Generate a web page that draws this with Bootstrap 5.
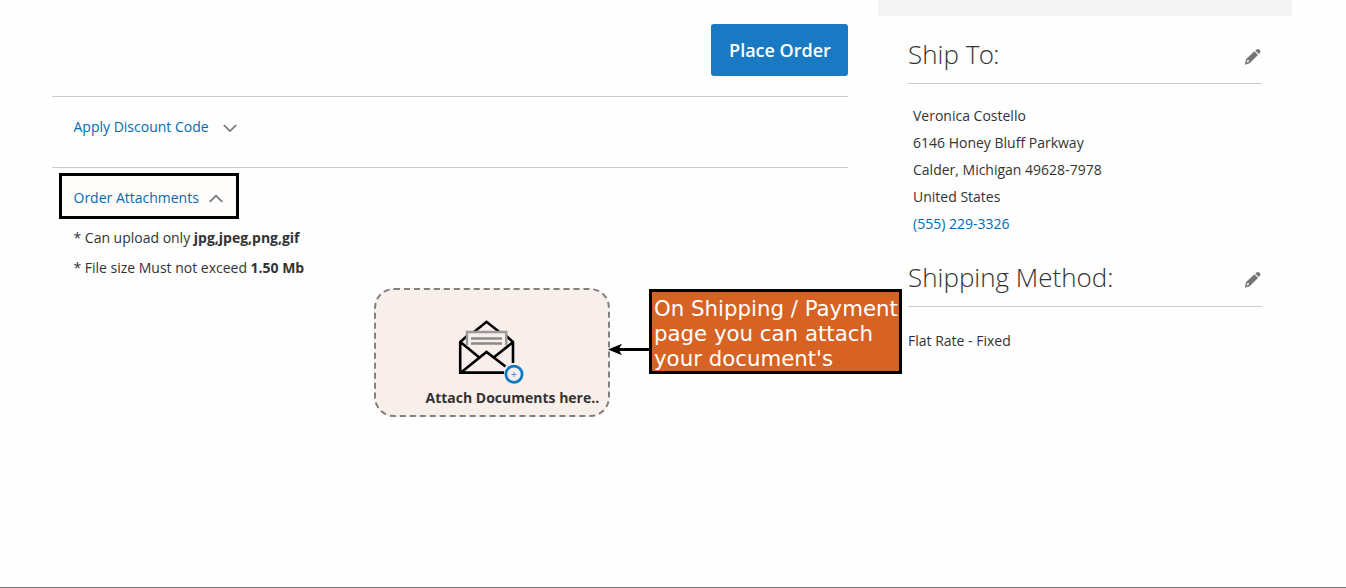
<!DOCTYPE html>
<html lang="en">
<head>
<meta charset="utf-8">
<meta name="viewport" content="width=device-width, initial-scale=1">
<title>Checkout</title>
<link rel="stylesheet" href="https://cdn.jsdelivr.net/npm/bootstrap@5.3.0/dist/css/bootstrap.min.css">
<style>
  body { font: 14px/27px "Open Sans", sans-serif; color: #333; background: #fefefe; }
  a { color: #006bb4; text-decoration: none; }
  .checkout { height: 588px; padding-left: 52px; gap: 30px; border-bottom: 1px solid #777; }
  .payment { width: 796px; padding-top: 24px; }
  .summary { width: 414px; }
  .btn-order { --bs-btn-color: #fff; --bs-btn-bg: #1979c3; --bs-btn-hover-bg: #006bb4; --bs-btn-hover-color: #fff;
    width: 137px; height: 52px; padding: 0 0 0 1px; border: 0; border-radius: 3px; font-size: 18px; font-weight: 600; margin-bottom: 20px; }
  .option { border-top: 1px solid #ccc; }
  .discount { height: 71px; padding: 16px 0 0 21.5px; }
  .discount svg { margin-left: 10.5px; }
  .attach-toggle { width: 180px; height: 46px; margin: 5px 0 0 7px; padding: 2px 0 0 11.5px; border: 3px solid #000; background: #fefdfc; }
  .attach-toggle svg { margin: 2px 0 0 10px; }
  .rules { padding: 4px 0 0 21.5px; margin: 0 0 5px; line-height: 30px; letter-spacing: -.01px; }
  .dropzone { width: 236px; height: 129px; margin-left: 322px; padding-top: 28px; background: #f9efea; border-radius: 20px; border: 2px dashed #808080; }
  .dropzone .envelope { margin-left: 81px; }
  .dropzone strong { display: block; margin-left: 49.5px; line-height: 20px; margin-top: 3px; white-space: nowrap; }
  .totals-end { height: 16px; background: #f4f4f4; }
  .info { padding: 0 30px; }
  .info-title { height: 68px; padding-top: 10px; border-bottom: 1px solid #ccc; }
  .info-title h2 { font-size: 26px; font-weight: 300; line-height: 56px; margin: 0; }
  .info-title svg { margin-top: 22px; }
  address { margin: 18px 0 0 5px; line-height: 27px; }
  .method .info-title { margin-top: 2px; }
  .callout { left: 649px; top: 289px; width: 253px; height: 85px; border: 3px solid #000; background: #d66323; color: #fff;
    font: 21.3px/25px "DejaVu Sans", sans-serif; padding: 4px 0 0 2px; white-space: nowrap; }
  .pointer { left: 608px; top: 342px; }
</style>
</head>
<body>
<div class="checkout d-flex position-relative overflow-hidden">
  <main class="payment flex-shrink-0">
    <div class="d-flex justify-content-end"><button class="btn btn-order">Place Order</button></div>
    <section class="option discount">
      <a href="#">Apply Discount Code</a>
      <svg width="14" height="9" viewBox="0 0 14 9" fill="none" stroke="#757575" stroke-width="1.7"><path d="M.8 1 7 7.100l6.200-6.100"/></svg>
    </section>
    <section class="option">
      <div class="attach-toggle d-flex align-items-center">
        <a href="#">Order Attachments</a>
        <svg width="14" height="9" viewBox="0 0 14 9" fill="none" stroke="#757575" stroke-width="1.7"><path d="M.8 7.8 7 1.7l6.200 6.100"/></svg>
      </div>
      <ul class="rules list-unstyled">
        <li>* Can upload only <b>jpg,jpeg,png,gif</b></li>
        <li>* File size Must not exceed <b>1.50 Mb</b></li>
      </ul>
      <div class="dropzone">
        <svg class="envelope d-block" width="70" height="67" viewBox="17 13 70 67" fill="none">
          <path d="M34 27 46.500 16.800 59.400 27M27 31l-6.800 6v30.600H64M66.300 31l6.700 6V58M21 37.500l18 14.700M72.500 37.500 54 52.200M21 67.500 46.500 47 65.500 61.500" stroke="#000" stroke-width="2.6"/>
          <path d="M27 40V27h39.300v13" stroke="#999" stroke-width="2.400"/>
          <path d="M31 33.500h31M31 38.500h31" stroke="#8b8b8b" stroke-width="2.500"/>
          <circle cx="74" cy="69.200" r="10" fill="#f9efea"/>
          <circle cx="74" cy="69.200" r="8.100" stroke="#087ac6" stroke-width="2.800"/>
          <path d="M71.500 69.500h5M74 67v5" stroke="#4c9bd0" stroke-width="1"/>
        </svg>
        <strong>Attach Documents here..</strong>
      </div>
    </section>
  </main>
  <aside class="summary flex-shrink-0">
    <div class="totals-end"></div>
    <section class="info">
      <div class="info-title d-flex justify-content-between">
        <h2>Ship <span style="letter-spacing:-.6px">To:</span></h2>
        <svg width="18" height="18" viewBox="0 0 18 18"><path fill="#757575" fill-rule="evenodd" d="M.8 16.700 2.100 11 10.500 3.200 14 6.900 5.700 15.200ZM2.600 14.700 4.600 13.800 5 12.300 3.600 11.700Z"/><path fill="#757575" d="m11.300 2.600 1.700-1.400q1.300-.6 2.500.6 1.400 1.300.7 2.600l-1.500 1.700Z"/></svg>
      </div>
      <address>Veronica Costello<br>6146 Honey Bluff Parkway<br>Calder, Michigan 49628-7978<br>United States<br><a href="#">(555) 229-3326</a></address>
    </section>
    <section class="info method">
      <div class="info-title d-flex justify-content-between">
        <h2>Shipping Method:</h2>
        <svg width="18" height="18" viewBox="0 0 18 18"><path fill="#757575" fill-rule="evenodd" d="M.8 16.700 2.100 11 10.500 3.200 14 6.900 5.700 15.200ZM2.600 14.700 4.600 13.800 5 12.300 3.600 11.700Z"/><path fill="#757575" d="m11.300 2.600 1.700-1.400q1.300-.6 2.500.6 1.400 1.300.7 2.600l-1.500 1.700Z"/></svg>
      </div>
      <div class="pt-3 mt-1">Flat Rate - Fixed</div>
    </section>
  </aside>
  <svg class="pointer position-absolute" width="42" height="14" viewBox="0 0 42 14"><path d="M9 7.500h33" stroke="#000" stroke-width="3"/><path d="M0 7.500 14 1.800 10.500 7.500 14 13.200Z"/></svg>
  <div class="callout position-absolute">On Shipping / Payment<br>page you can attach<br>your document's</div>
</div>
<script src="https://cdn.jsdelivr.net/npm/bootstrap@5.3.0/dist/js/bootstrap.bundle.min.js"></script>
</body>
</html>
